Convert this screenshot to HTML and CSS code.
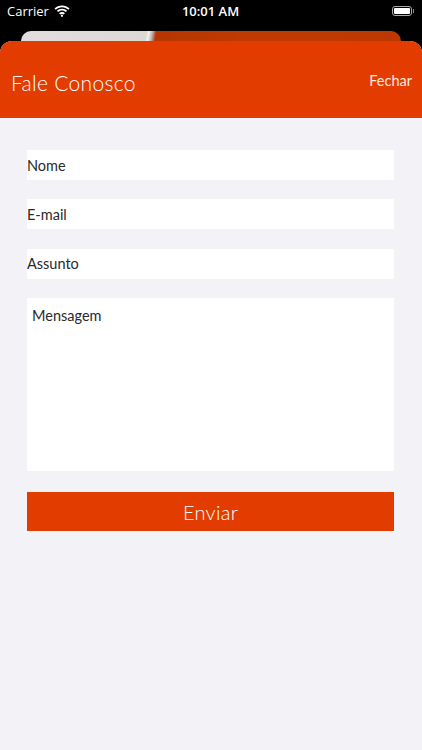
FILE: index.html
```html
<!DOCTYPE html>
<html lang="pt">
<head>
    <meta charset="UTF-8">
    <meta name="viewport" content="width=device-width, initial-scale=1.0">
    <title>Fale Conosco</title>
    <link rel="stylesheet" href="styles.css">
</head>
<body>
    <!-- Status bar -->
    <div class="status-bar">
        <div class="status-left">
            <span>Carrier</span>
            <svg class="wifi" width="16" height="12" viewBox="0 0 16 12">
                <path d="M8 2.2c2.4 0 4.6.9 6.3 2.5l1.2-1.3C13.5 1.5 10.9.4 8 .4S2.5 1.5.5 3.4l1.2 1.3C3.4 3.1 5.6 2.2 8 2.2z" fill="#fff"/>
                <path d="M8 5.6c1.5 0 2.9.6 3.9 1.5l1.2-1.3C11.8 4.6 10 3.8 8 3.8s-3.8.8-5.1 2l1.2 1.3C5.1 6.2 6.5 5.6 8 5.6z" fill="#fff"/>
                <path d="M8 9c.6 0 1.1.2 1.5.6L11 8.2C10.2 7.5 9.200 7.1 8 7.1s-2.2.4-3 1.1l1.5 1.4C6.9 9.2 7.4 9 8 9z" fill="#fff"/>
                <circle cx="8" cy="10.8" r="1.1" fill="#fff"/>
            </svg>
        </div>
        <div class="status-time">10:01 AM</div>
        <div class="status-right">
            <div class="battery"><div class="battery-level"></div></div>
            <div class="battery-cap"></div>
        </div>
    </div>

    <!-- Card behind the sheet -->
    <div class="back-card"></div>

    <!-- Sheet -->
    <div class="sheet">
        <div class="sheet-header">
            <h1>Fale Conosco</h1>
            <span class="close-link">Fechar</span>
        </div>

        <form class="contact-form">
            <input type="text" class="field" placeholder="Nome">
            <input type="email" class="field" placeholder="E-mail">
            <input type="text" class="field" placeholder="Assunto">
            <textarea class="field message" placeholder="Mensagem"></textarea>
            <button type="button" class="send-button">Enviar</button>
        </form>
    </div>
</body>
</html>
```

FILE: styles.css
```css
body {
    margin: 0;
    background-color: #000;
    font-family: Lato, "Open Sans", sans-serif;
    height: 750px;
    display: flex;
    flex-direction: column;
    overflow: hidden;
}
.status-bar {
    height: 22px;
    display: flex;
    align-items: center;
    justify-content: space-between;
    padding: 0 8px 0 7px;
    color: #fff;
    font-family: "Open Sans", sans-serif;
    font-size: 13px;
}
.status-left {
    display: flex;
    align-items: center;
    gap: 5px;
    width: 100px;
}
.status-time {
    font-weight: 600;
    font-size: 13px;
}
.status-right {
    display: flex;
    align-items: center;
    justify-content: flex-end;
    width: 100px;
}
.battery {
    width: 20px;
    height: 10px;
    border: 1px solid #aaa;
    border-radius: 3px;
    padding: 1px;
    box-sizing: border-box;
}
.battery-level {
    width: 100%;
    height: 100%;
    background-color: #fff;
    border-radius: 1px;
}
.battery-cap {
    width: 1.5px;
    height: 4px;
    background-color: #888;
    margin-left: 1px;
}
.back-card {
    height: 10px;
    margin: 9px 21px 0 21px;
    border-radius: 10px 10px 0 0;
    background: linear-gradient(100deg, #e2dedd 0, #dcd8d6 33%, #f6f4f3 33.5%, #b8b2ae 34.5%, #b63500 35.5%, #c03a00 60%, #bd3800 100%);
}
.sheet {
    flex: 1;
    background-color: #f2f2f7;
    border-radius: 12px 12px 0 0;
    overflow: hidden;
}
.sheet-header {
    height: 77px;
    background-color: #e33c00;
    display: flex;
    align-items: center;
    justify-content: space-between;
    padding: 6px 10px 0 11px;
    box-sizing: border-box;
    color: #fff;
}
.sheet-header h1 {
    margin: 0;
    font-size: 21px;
    font-weight: 300;
    letter-spacing: 0.3px;
}
.close-link {
    font-size: 14.5px;
    font-weight: 400;
    margin-top: -4px;
    color: #fbe9e2;
}
.contact-form {
    display: flex;
    flex-direction: column;
    gap: 19.3px;
    padding: 32px 28px 0 27px;
}
.field {
    height: 30px;
    border: none;
    background-color: #fff;
    padding: 0;
    font-family: Lato, "Open Sans", sans-serif;
    font-size: 14.5px;
    color: #333;
    outline: none;
    box-sizing: border-box;
}
.field::placeholder {
    color: #2a2a2a;
}
.message {
    height: 173px;
    padding: 9px 5px;
    resize: none;
}
.send-button {
    margin-top: 2px;
    height: 39px;
    border: none;
    background-color: #e33c00;
    color: #fff;
    font-family: Lato, "Open Sans", sans-serif;
    font-size: 20px;
    font-weight: 300;
    letter-spacing: 0.3px;
    cursor: pointer;
}
```
